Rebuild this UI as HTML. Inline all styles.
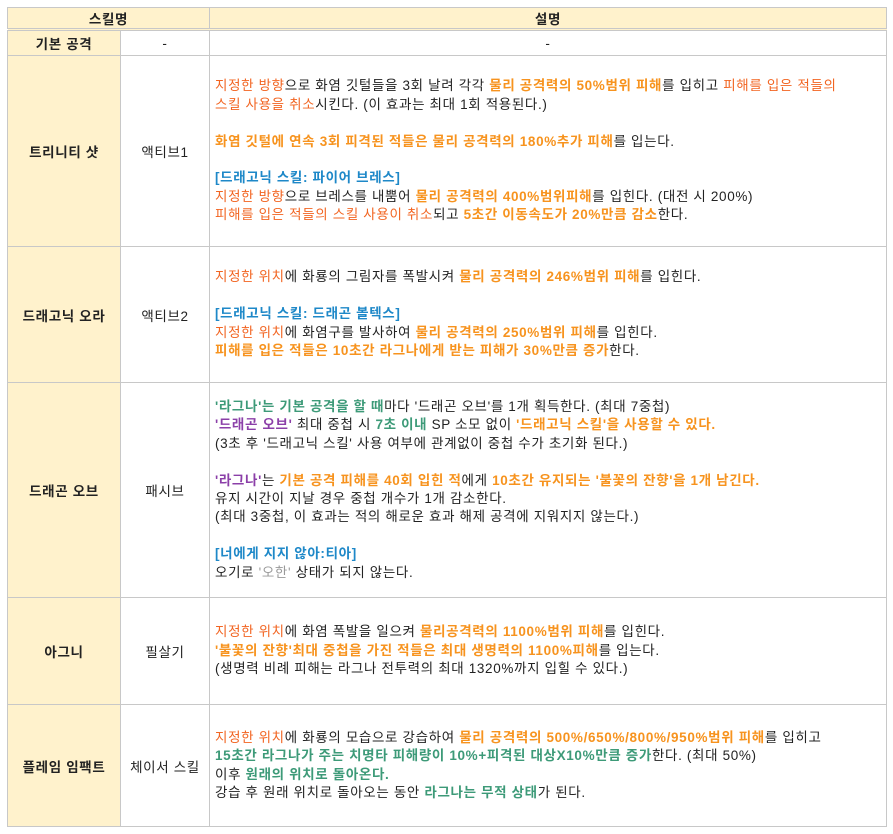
<!DOCTYPE html>
<html><head><meta charset="utf-8"><style>
body{margin:0;background:#fff;font-family:"Liberation Sans","Noto Sans CJK KR",sans-serif;font-size:13.5px;letter-spacing:0.65px;color:#222;}
table{position:absolute;left:7px;top:7px;border-collapse:collapse;width:880px;table-layout:fixed;}
td{border:1px solid #c8c8c8;padding:0;vertical-align:middle;text-align:center;}
.h{background:#fff2cc;font-weight:bold;}
.d{text-align:left;padding-left:5px;line-height:18.4px;white-space:nowrap;}
.r{color:#f26522}
.o{color:#f7931e;font-weight:bold}
.g{color:#3d9a78;font-weight:bold}
.p{color:#8b3fa8;font-weight:bold}
.b{color:#1e88c8;font-weight:bold}
.gr{color:#999}
tr.hd td{border-bottom:3px double #c8c8c8}
</style></head><body>
<table>
<colgroup><col style="width:113px"><col style="width:89px"><col></colgroup>
<tr class="hd" style="height:22px"><td class="h" colspan="2">스킬명</td><td class="h">설명</td></tr>
<tr style="height:26px"><td class="h">기본 공격</td><td>-</td><td>-</td></tr>
<tr style="height:191px"><td class="h">트리니티 샷</td><td>액티브1</td><td class="d">
<span class="r">지정한 방향</span>으로 화염 깃털들을 3회 날려 각각 <span class="o">물리 공격력의 50%범위 피해</span>를 입히고 <span class="r">피해를 입은 적들의<br>스킬 사용을 취소</span>시킨다. (이 효과는 최대 1회 적용된다.)<br><br>
<span class="o">화염 깃털에 연속 3회 피격된 적들은 물리 공격력의 180%추가 피해</span>를 입는다.<br><br>
<span class="b">[드래고닉 스킬: 파이어 브레스]</span><br>
<span class="r">지정한 방향</span>으로 브레스를 내뿜어 <span class="o">물리 공격력의 400%범위피해</span>를 입힌다. (대전 시 200%)<br>
<span class="r">피해를 입은 적들의 스킬 사용이 취소</span>되고 <span class="o">5초간 이동속도가 20%만큼 감소</span>한다.</td></tr>
<tr style="height:136px"><td class="h">드래고닉 오라</td><td>액티브2</td><td class="d">
<span class="r">지정한 위치</span>에 화룡의 그림자를 폭발시켜 <span class="o">물리 공격력의 246%범위 피해</span>를 입힌다.<br><br>
<span class="b">[드래고닉 스킬: 드래곤 볼텍스]</span><br>
<span class="r">지정한 위치</span>에 화염구를 발사하여 <span class="o">물리 공격력의 250%범위 피해</span>를 입힌다.<br>
<span class="o">피해를 입은 적들은 10초간 라그나에게 받는 피해가 30%만큼 증가</span>한다.</td></tr>
<tr style="height:215px"><td class="h">드래곤 오브</td><td>패시브</td><td class="d">
<span class="g">'라그나'는 기본 공격을 할 때</span>마다 '드래곤 오브'를 1개 획득한다. (최대 7중첩)<br>
<span class="p">'드래곤 오브'</span> 최대 중첩 시 <span class="g">7초 이내</span> SP 소모 없이 <span class="o">'드래고닉 스킬'을 사용할 수 있다.</span><br>
(3초 후 '드래고닉 스킬' 사용 여부에 관계없이 중첩 수가 초기화 된다.)<br><br>
<span class="p">'라그나'</span>는 <span class="o">기본 공격 피해를 40회 입힌 적</span>에게 <span class="o">10초간 유지되는 '불꽃의 잔향'을 1개 남긴다.</span><br>
유지 시간이 지날 경우 중첩 개수가 1개 감소한다.<br>
(최대 3중첩, 이 효과는 적의 해로운 효과 해제 공격에 지워지지 않는다.)<br><br>
<span class="b">[너에게 지지 않아:티아]</span><br>
오기로 <span class="gr">'오한'</span> 상태가 되지 않는다.</td></tr>
<tr style="height:107px"><td class="h">아그니</td><td>필살기</td><td class="d">
<span class="r">지정한 위치</span>에 화염 폭발을 일으켜 <span class="o">물리공격력의 1100%범위 피해</span>를 입힌다.<br>
<span class="o">'불꽃의 잔향'최대 중첩을 가진 적들은 최대 생명력의 1100%피해</span>를 입는다.<br>
(생명력 비례 피해는 라그나 전투력의 최대 1320%까지 입힐 수 있다.)</td></tr>
<tr style="height:122px"><td class="h">플레임 임팩트</td><td>체이서 스킬</td><td class="d">
<span class="r">지정한 위치</span>에 화룡의 모습으로 강습하여 <span class="o">물리 공격력의 500%/650%/800%/950%범위 피해</span>를 입히고<br>
<span class="g">15초간 라그나가 주는 치명타 피해량이 10%+피격된 대상X10%만큼 증가</span>한다. (최대 50%)<br>
이후 <span class="g">원래의 위치로 돌아온다.</span><br>
강습 후 원래 위치로 돌아오는 동안 <span class="g">라그나는 무적 상태</span>가 된다.</td></tr>
</table>
</body></html>
